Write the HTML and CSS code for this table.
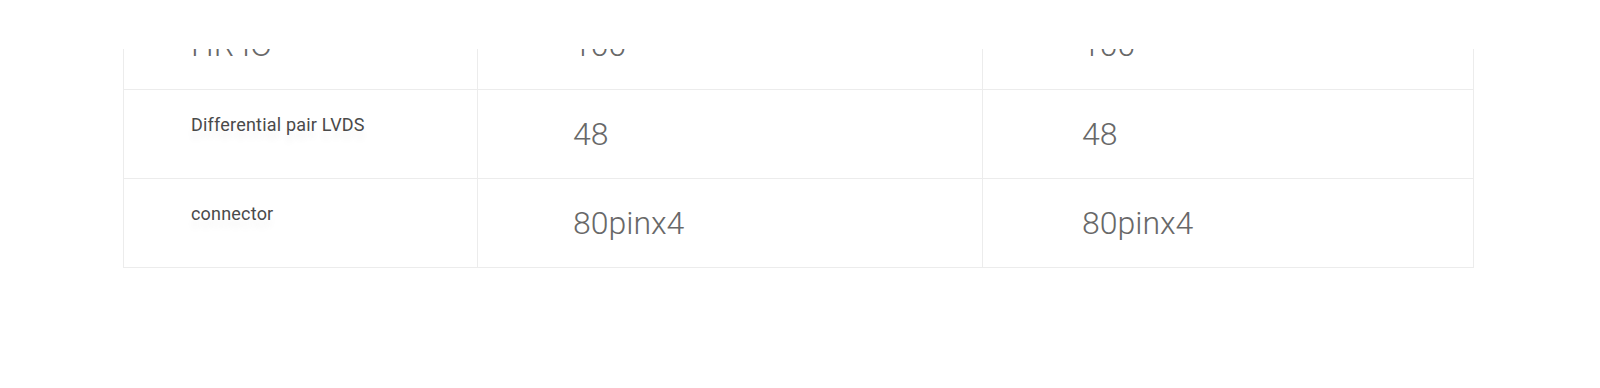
FILE: index.html
```html
<!DOCTYPE html>
<html lang="en">
<head>
<meta charset="utf-8">
<title>Spec table</title>
<link rel="stylesheet" href="styles.css">
</head>
<body>
<div class="viewport">
  <table class="spec">
    <colgroup>
      <col class="c-label">
      <col class="c-val">
      <col class="c-val2">
    </colgroup>
    <tbody>
      <tr>
        <td class="label big">HR IO</td>
        <td class="val">100</td>
        <td class="val v3">100</td>
      </tr>
      <tr>
        <td class="label">Differential pair LVDS</td>
        <td class="val">48</td>
        <td class="val v3">48</td>
      </tr>
      <tr>
        <td class="label">connector</td>
        <td class="val">80pinx4</td>
        <td class="val v3">80pinx4</td>
      </tr>
    </tbody>
  </table>
</div>
</body>
</html>
```
FILE: styles.css
```css
html, body {
  margin: 0;
  padding: 0;
  background: #ffffff;
}
body {
  width: 1600px;
  height: 388px;
  overflow: hidden;
  font-family: Roboto, "Liberation Sans", sans-serif;
}
.viewport {
  margin-top: 49px;
  padding: 0 127px 0 123px;
  height: 240px;
  overflow: hidden;
}
.spec {
  margin-top: -49px;
  width: 1350px;
  border-collapse: collapse;
  table-layout: fixed;
}
.c-label { width: 354px; }
.c-val { width: 505px; }
.c-val2 { width: 491px; }
.spec td {
  border: 1px solid #ececec;
  height: 89px;
  box-sizing: border-box;
  vertical-align: top;
  padding: 0;
}
.label {
  padding: 23px 0 0 67px !important;
  font-size: 18px;
  line-height: 24px;
  color: #4a4a4a;
  letter-spacing: 0.2px;
  text-shadow: 0 9px 6px rgba(0, 0, 0, 0.05);
}
.val, .label.big {
  padding: 24px 0 0 95px !important;
  font-size: 32px;
  line-height: 40px;
  font-weight: 300;
  color: #686868;
  letter-spacing: 0;
  text-shadow: none;
}
.val.v3 {
  padding-left: 99px !important;
}
.label.big {
  padding-left: 67px !important;
}
```
